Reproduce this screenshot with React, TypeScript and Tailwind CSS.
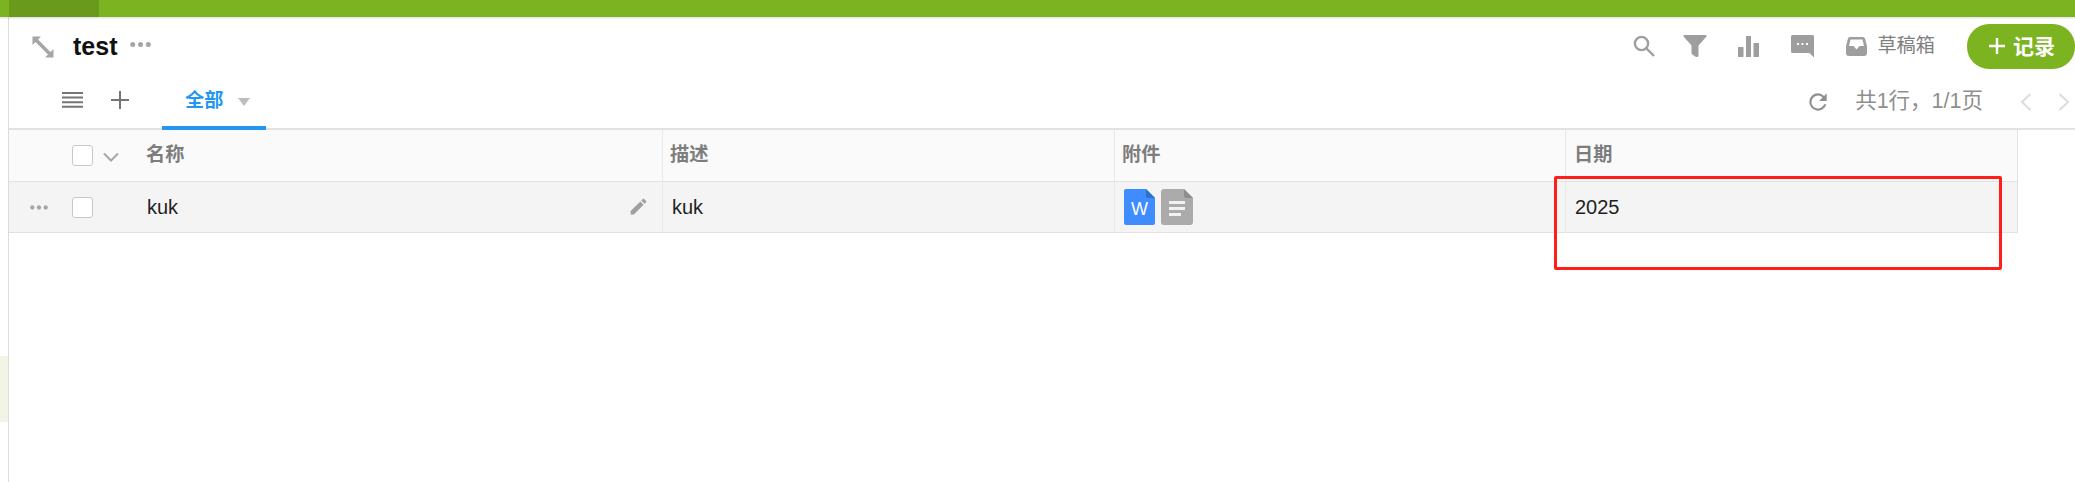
import React from "react";

const Path = ({ d, cls, box = "0 0 24 24" }: { d: string; cls: string; box?: string }) => (
  <svg viewBox={box} className={cls} fill="currentColor">
    <path d={d} />
  </svg>
);

const Check = () => (
  <span className="block w-[21px] h-[21px] rounded-[3px] border border-[#c8c8c8] bg-white shrink-0" />
);

const Dots = ({ cls }: { cls: string }) => (
  <svg viewBox="0 0 21 5" className={cls} fill="currentColor">
    <circle cx="2.7" cy="2.5" r="2.5" />
    <circle cx="10.5" cy="2.5" r="2.5" />
    <circle cx="18.3" cy="2.5" r="2.5" />
  </svg>
);

export default function App() {
  return (
    <div className="relative w-[2075px] h-[482px] overflow-hidden bg-white font-['Liberation_Sans','Noto_Sans_CJK_SC',sans-serif] text-[19.2px] text-[#1f1f1f]">
      <div className="h-[17px] bg-[#7cb421] pl-[9px] shadow-[0_1px_2px_rgba(0,0,0,0.15)] relative">
        <div className="w-[90px] h-full bg-[#6a9a1c]" />
      </div>
      <div className="flex h-[465px]">
        <div className="w-2 pt-[339px] shrink-0">
          <div className="h-[66px] bg-[#f2f5e6]" />
        </div>
        <div className="flex-1 border-l border-[#dcdcdc] min-w-0">
          {/* title row */}
          <div className="h-[53px] flex items-center pt-[6px]">
            <svg viewBox="0 0 22 22" className="ml-[23px] w-[22px] h-[22px] text-[#a6a6a6]" fill="currentColor">
              <path d="M0.5 0.5H9L6 3.5L18.5 16L21.5 13V21.5H13L16 18.5L3.5 6L0.5 9Z" />
            </svg>
            <span className="ml-[19px] text-[25px] font-bold text-[#111] leading-none">test</span>
            <Dots cls="ml-[13px] mb-[5px] w-[21px] h-[5px] text-[#a6a6a6]" />
            <div className="ml-auto flex items-center text-[#9e9e9e] -mt-[1px]">
              <svg viewBox="0 0 22 22" className="-ml-px w-[22px] h-[22px]" fill="none" stroke="currentColor" strokeWidth="2.4">
                <circle cx="8.5" cy="8.5" r="6.6" />
                <path d="M13.5 13.5L21 21" />
              </svg>
              <svg viewBox="0 0 24 22" className="ml-[28px] w-[24px] h-[22px]" fill="currentColor">
                <path d="M1.5 0H22.5Q24 0 23.5 1.5L15.5 10.5V20.5Q15.5 22 14 22Q12 22 10 20L8.5 18.5V10.5L0.5 1.5Q0 0 1.5 0Z" />
              </svg>
              <svg viewBox="0 0 21 21" className="ml-[31px] w-[21px] h-[21px]" fill="currentColor">
                <path d="M0 11H5.5V21H0ZM8 0H13V21H8ZM15.5 7H21V21H15.5Z" />
              </svg>
              <svg viewBox="0 0 23 23" className="ml-[32px] w-[23px] h-[23px]" fill="currentColor">
                <path fillRule="evenodd" d="M1.5 0H21.5Q23 0 23 1.5V22.5L18.5 18H1.5Q0 18 0 16.5V1.5Q0 0 1.5 0ZM6 8V10H8V8ZM10.5 8V10H12.5V8ZM15 8V10H17V8Z" />
              </svg>
              <svg viewBox="0 0 21 19" className="ml-[32px] w-[21px] h-[19px]" fill="currentColor">
                <path fillRule="evenodd" d="M4 0H17Q18.5 0 19 1.5L21 9V16Q21 19 18 19H3Q0 19 0 16V9L2 1.5Q2.500 0 4 0ZM4.500 2.500L3 9H7.500L10.500 12.500L13.500 9H18L16.500 2.500Z" />
              </svg>
              <span className="ml-[10px] text-[#7f7f7f] leading-none">草稿箱</span>
              <button className="ml-[32px] w-[108px] h-[45px] rounded-[22px] bg-[#7cb421] text-white font-bold flex items-center justify-center gap-[8px] pl-[2px] text-[21px]">
                <svg viewBox="0 0 16 16" className="w-[16px] h-[16px]" fill="currentColor">
                  <path d="M6.800 0H9.200V6.800H16V9.200H9.200V16H6.800V9.200H0V6.800H6.800Z" />
                </svg>
                <span className="leading-none">记录</span>
              </button>
            </div>
          </div>
          {/* tab row */}
          <div className="h-[60px] flex items-end border-b-2 border-[#e2e2e2]">
            <div className="flex items-center h-[60px] pl-[53px] pt-[4px]">
              <svg viewBox="0 0 21 16" className="w-[21px] h-[16px] text-[#757575]" fill="currentColor">
                <path d="M0 0H21V2H0ZM0 4.600H21V6.600H0ZM0 9.200H21V11.200H0ZM0 13.800H21V15.800H0Z" />
              </svg>
              <svg viewBox="0 0 18 18" className="ml-[28px] w-[18px] h-[18px] text-[#757575]" fill="currentColor">
                <path d="M8 0H10V8H18V10H10V18H8V10H0V8H8Z" />
              </svg>
            </div>
            <div className="ml-[33px] w-[104px] h-[60px] -mb-[2px] border-b-[4px] border-[#2196f3] flex items-center pl-[23px] pt-[6px]">
              <span className="text-[#2196f3] font-bold leading-none">全部</span>
              <span className="ml-[15px] mt-[1px] w-0 h-0 border-x-[6.5px] border-x-transparent border-t-[8px] border-t-[#bdbdbd]" />
            </div>
            <div className="ml-auto h-[60px] flex items-center text-[#8f8f8f] pt-[7px]">
              <svg viewBox="0 0 24 24" className="w-[26px] h-[26px]" fill="currentColor">
                <path d="M17.650 6.350A7.950 7.950 0 0 0 12 4a8 8 0 1 0 7.730 10h-2.080A6 6 0 1 1 12 6c1.660 0 3.140.69 4.220 1.780L13 11h7V4l-2.350 2.350z" />
              </svg>
              <span className="ml-[24px] leading-none text-[21.5px]">共1行，1/1页</span>
              <svg viewBox="0 0 12 18" className="ml-[37px] w-[12px] h-[18px] text-[#dedede]" fill="none" stroke="currentColor" strokeWidth="2.200">
                <path d="M10.500 1L2 9L10.500 17" />
              </svg>
              <svg viewBox="0 0 12 18" className="ml-[26px] mr-[5px] w-[12px] h-[18px] text-[#dedede]" fill="none" stroke="currentColor" strokeWidth="2.200">
                <path d="M1.500 1L10 9L1.500 17" />
              </svg>
            </div>
          </div>
          {/* table */}
          <div className="w-[2009px] border-r border-[#e2e2e2]">
            <div className="grid grid-cols-[654px_452px_451px_451px] h-[52px] bg-[#fafafa] border-b border-[#e2e2e2] font-bold text-[#7d7d7d]">
              <div className="flex items-center border-r border-[#e8e8e8] pl-[63px]">
                <Check />
                <svg viewBox="0 0 16 10" className="ml-[10px] mt-[2px] w-[16px] h-[10px] text-[#a6a6a6]" fill="none" stroke="currentColor" strokeWidth="2">
                  <path d="M1 1.500L8 8.500L15 1.500" />
                </svg>
                <span className="ml-[27px]">名称</span>
              </div>
              <div className="flex items-center border-r border-[#e8e8e8] pl-[7px]">描述</div>
              <div className="flex items-center border-r border-[#e8e8e8] pl-[7px]">附件</div>
              <div className="flex items-center pl-[8px]">日期</div>
            </div>
            <div className="grid grid-cols-[654px_452px_451px_451px] h-[51px] bg-[#f4f4f4] border-b border-[#e2e2e2] text-[20px]">
              <div className="flex items-center border-r border-[#e8e8e8] pl-[21px] pr-[13px]">
                <Dots cls="w-[18px] h-[5px] text-[#a6a6a6]" />
                <span className="ml-[24px]"><Check /></span>
                <span className="ml-[54px]">kuk</span>
                <Path cls="ml-auto -mt-[2px] w-[21px] h-[21px] text-[#a0a0a0]" d="M3 17.250V21h3.750L17.810 9.940l-3.750-3.750L3 17.250zM20.710 7.040a1 1 0 0 0 0-1.410l-2.340-2.340a1 1 0 0 0-1.410 0l-1.830 1.830 3.750 3.750 1.830-1.830z" />
              </div>
              <div className="flex items-center border-r border-[#e8e8e8] pl-[9px]">kuk</div>
              <div className="flex items-center gap-[6px] border-r border-[#e8e8e8] pl-[9px]">
                <svg viewBox="0 0 31 36" className="w-[31px] h-[36px]">
                  <path d="M2 0H22L31 9V34Q31 36 29 36H2Q0 36 0 34V2Q0 0 2 0Z" fill="#3f8cff" />
                  <path d="M22 0L31 9H24Q22 9 22 7Z" fill="#2f6fd0" />
                  <text x="15.500" y="25.500" textAnchor="middle" fontSize="18" fill="#fff" fontFamily="Liberation Sans">W</text>
                </svg>
                <svg viewBox="0 0 32 36" className="w-[32px] h-[36px]">
                  <path d="M3 0H23L32 9V33Q32 36 29 36H3Q0 36 0 33V3Q0 0 3 0Z" fill="#ababab" />
                  <path d="M23 0L32 9H25Q23 9 23 7Z" fill="#8e8e8e" />
                  <path d="M8 12H24V15H8ZM8 18H24V21H8ZM8 24H20V27H8Z" fill="#f2f2f2" />
                </svg>
              </div>
              <div className="flex items-center pl-[9px]">2025</div>
            </div>
          </div>
        </div>
      </div>
      {/* red annotation drawn over the screenshot */}
      <div className="absolute left-[1554px] top-[176px] w-[448px] h-[94px] border-[3px] border-[#ff1f1a] rounded-[2px]" />
    </div>
  );
}
